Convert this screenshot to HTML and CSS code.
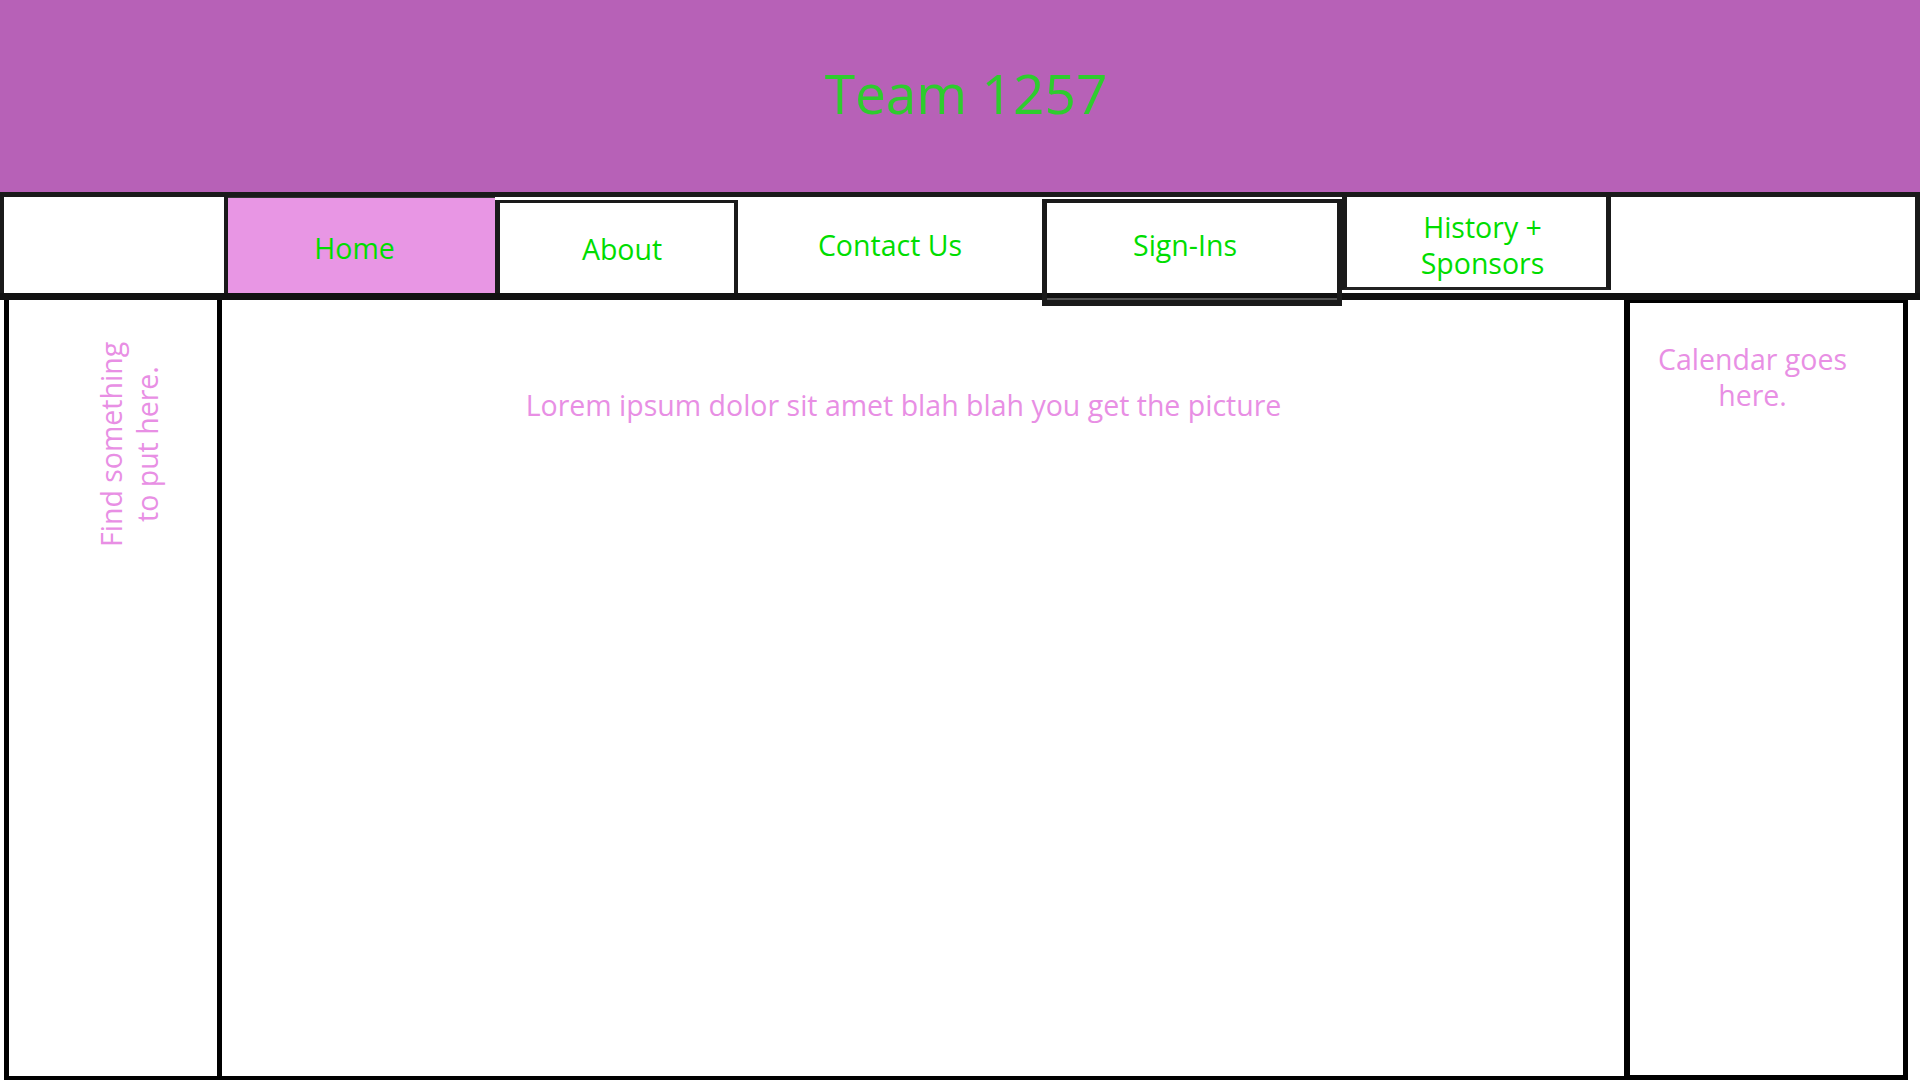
FILE: index.html
```html
<!DOCTYPE html>
<html lang="en">
<head>
<meta charset="utf-8">
<title>Team 1257</title>
<link rel="stylesheet" href="styles.css">
</head>
<body>
<header class="header">
  <h1 class="title">Team 1257</h1>
</header>
<nav class="nav">
  <div class="nav-item nav-blank"></div>
  <a class="nav-item nav-home" href="#">Home</a>
  <a class="nav-item nav-about" href="#">About</a>
  <a class="nav-item nav-contact" href="#">Contact Us</a>
  <a class="nav-item nav-signins" href="#">Sign-Ins</a>
  <a class="nav-item nav-history" href="#">History +<br>Sponsors</a>
  <div class="nav-item nav-end"></div>
</nav>
<main class="content">
  <aside class="side-left">
    <p class="side-text">Find something<br>to put here.</p>
  </aside>
  <section class="main-area">
    <p class="lorem">Lorem ipsum dolor sit amet blah blah you get the picture</p>
  </section>
  <aside class="side-right">
    <p class="calendar">Calendar goes<br>here.</p>
  </aside>
</main>
</body>
</html>
```
FILE: styles.css
```css
html, body {
  margin: 0;
  padding: 0;
  background: #ffffff;
  height: 1080px;
  overflow: hidden;
}

body {
  font-family: "Open Sans", "Noto Sans", sans-serif;
}

.header {
  height: 192px;
  background: #b761b7;
  display: flex;
  align-items: center;
  justify-content: center;
  box-sizing: border-box;
  padding-bottom: 8px;
}

.title {
  margin: 0;
  font-size: 55px;
  font-weight: 400;
  color: #2ecc2e;
  line-height: 75px;
  padding-left: 12px;
}

.nav {
  display: flex;
  height: 96px;
  border-top: 5px solid #1a1a1a;
  border-bottom: 7px solid #111111;
  background: #ffffff;
}

.nav-item {
  box-sizing: border-box;
  height: 96px;
  display: flex;
  align-items: center;
  justify-content: center;
  text-align: center;
  font-size: 28.5px;
  line-height: 36px;
  color: #00dd00;
  text-decoration: none;
  flex: none;
}

.nav-blank {
  width: 228px;
  border-left: 4px solid #1a1a1a;
  border-right: 4px solid #1a1a1a;
}

.nav-home {
  width: 267px;
  background: #e896e4;
  padding-right: 14px;
  padding-top: 5px;
  border-top: 1px solid #333333;
}

.nav-about {
  width: 243px;
  border-left: 5px solid #1a1a1a;
  border-right: 4px solid #1a1a1a;
  border-top: 3px solid #1a1a1a;
  margin-top: 3px;
  height: 93px;
  padding-left: 10px;
  padding-top: 1px;
}

.nav-contact {
  width: 304px;
  padding-bottom: 1px;
}

.nav-signins {
  width: 300px;
  height: 107px;
  margin-top: 2px;
  align-self: flex-start;
  border: 5px solid #1a1a1a;
  border-top-width: 4px;
  border-bottom-width: 6px;
  padding-right: 14px;
  padding-bottom: 14px;
  box-shadow: inset 0 -2px 0 #555555;
}

.nav-history {
  width: 269px;
  height: 93px;
  border-left: 5px solid #1a1a1a;
  border-right: 5px solid #1a1a1a;
  border-bottom: 3px solid #222222;
  padding-left: 12px;
  padding-top: 5px;
}

.nav-end {
  width: 309px;
  border-right: 5px solid #1a1a1a;
}

.content {
  display: flex;
  height: 780px;
}

.side-left {
  box-sizing: border-box;
  width: 218px;
  margin-left: 4px;
  border-left: 5px solid #000000;
  border-right: 5px solid #000000;
  border-bottom: 4px solid #000000;
  padding-left: 84px;
  padding-top: 24px;
  flex: none;
}

.side-text {
  margin: 0;
  writing-mode: vertical-rl;
  transform: rotate(180deg);
  height: 240px;
  text-align: center;
  font-size: 28.5px;
  line-height: 36px;
  color: #e88fe4;
}

.main-area {
  box-sizing: border-box;
  flex: 1;
  border-bottom: 4px solid #000000;
  padding-top: 87px;
  padding-right: 39px;
}

.lorem {
  margin: 0;
  text-align: center;
  font-size: 28.5px;
  line-height: 36px;
  color: #e88fe4;
}

.side-right {
  box-sizing: border-box;
  width: 284px;
  margin-right: 12px;
  border-left: 6px solid #000000;
  border-right: 5px solid #000000;
  border-top: 3px solid #000000;
  border-bottom: 5px solid #000000;
  padding-top: 38px;
  padding-right: 28px;
  flex: none;
}

.calendar {
  margin: 0;
  text-align: center;
  font-size: 28.5px;
  line-height: 36px;
  color: #e88fe4;
}
```
